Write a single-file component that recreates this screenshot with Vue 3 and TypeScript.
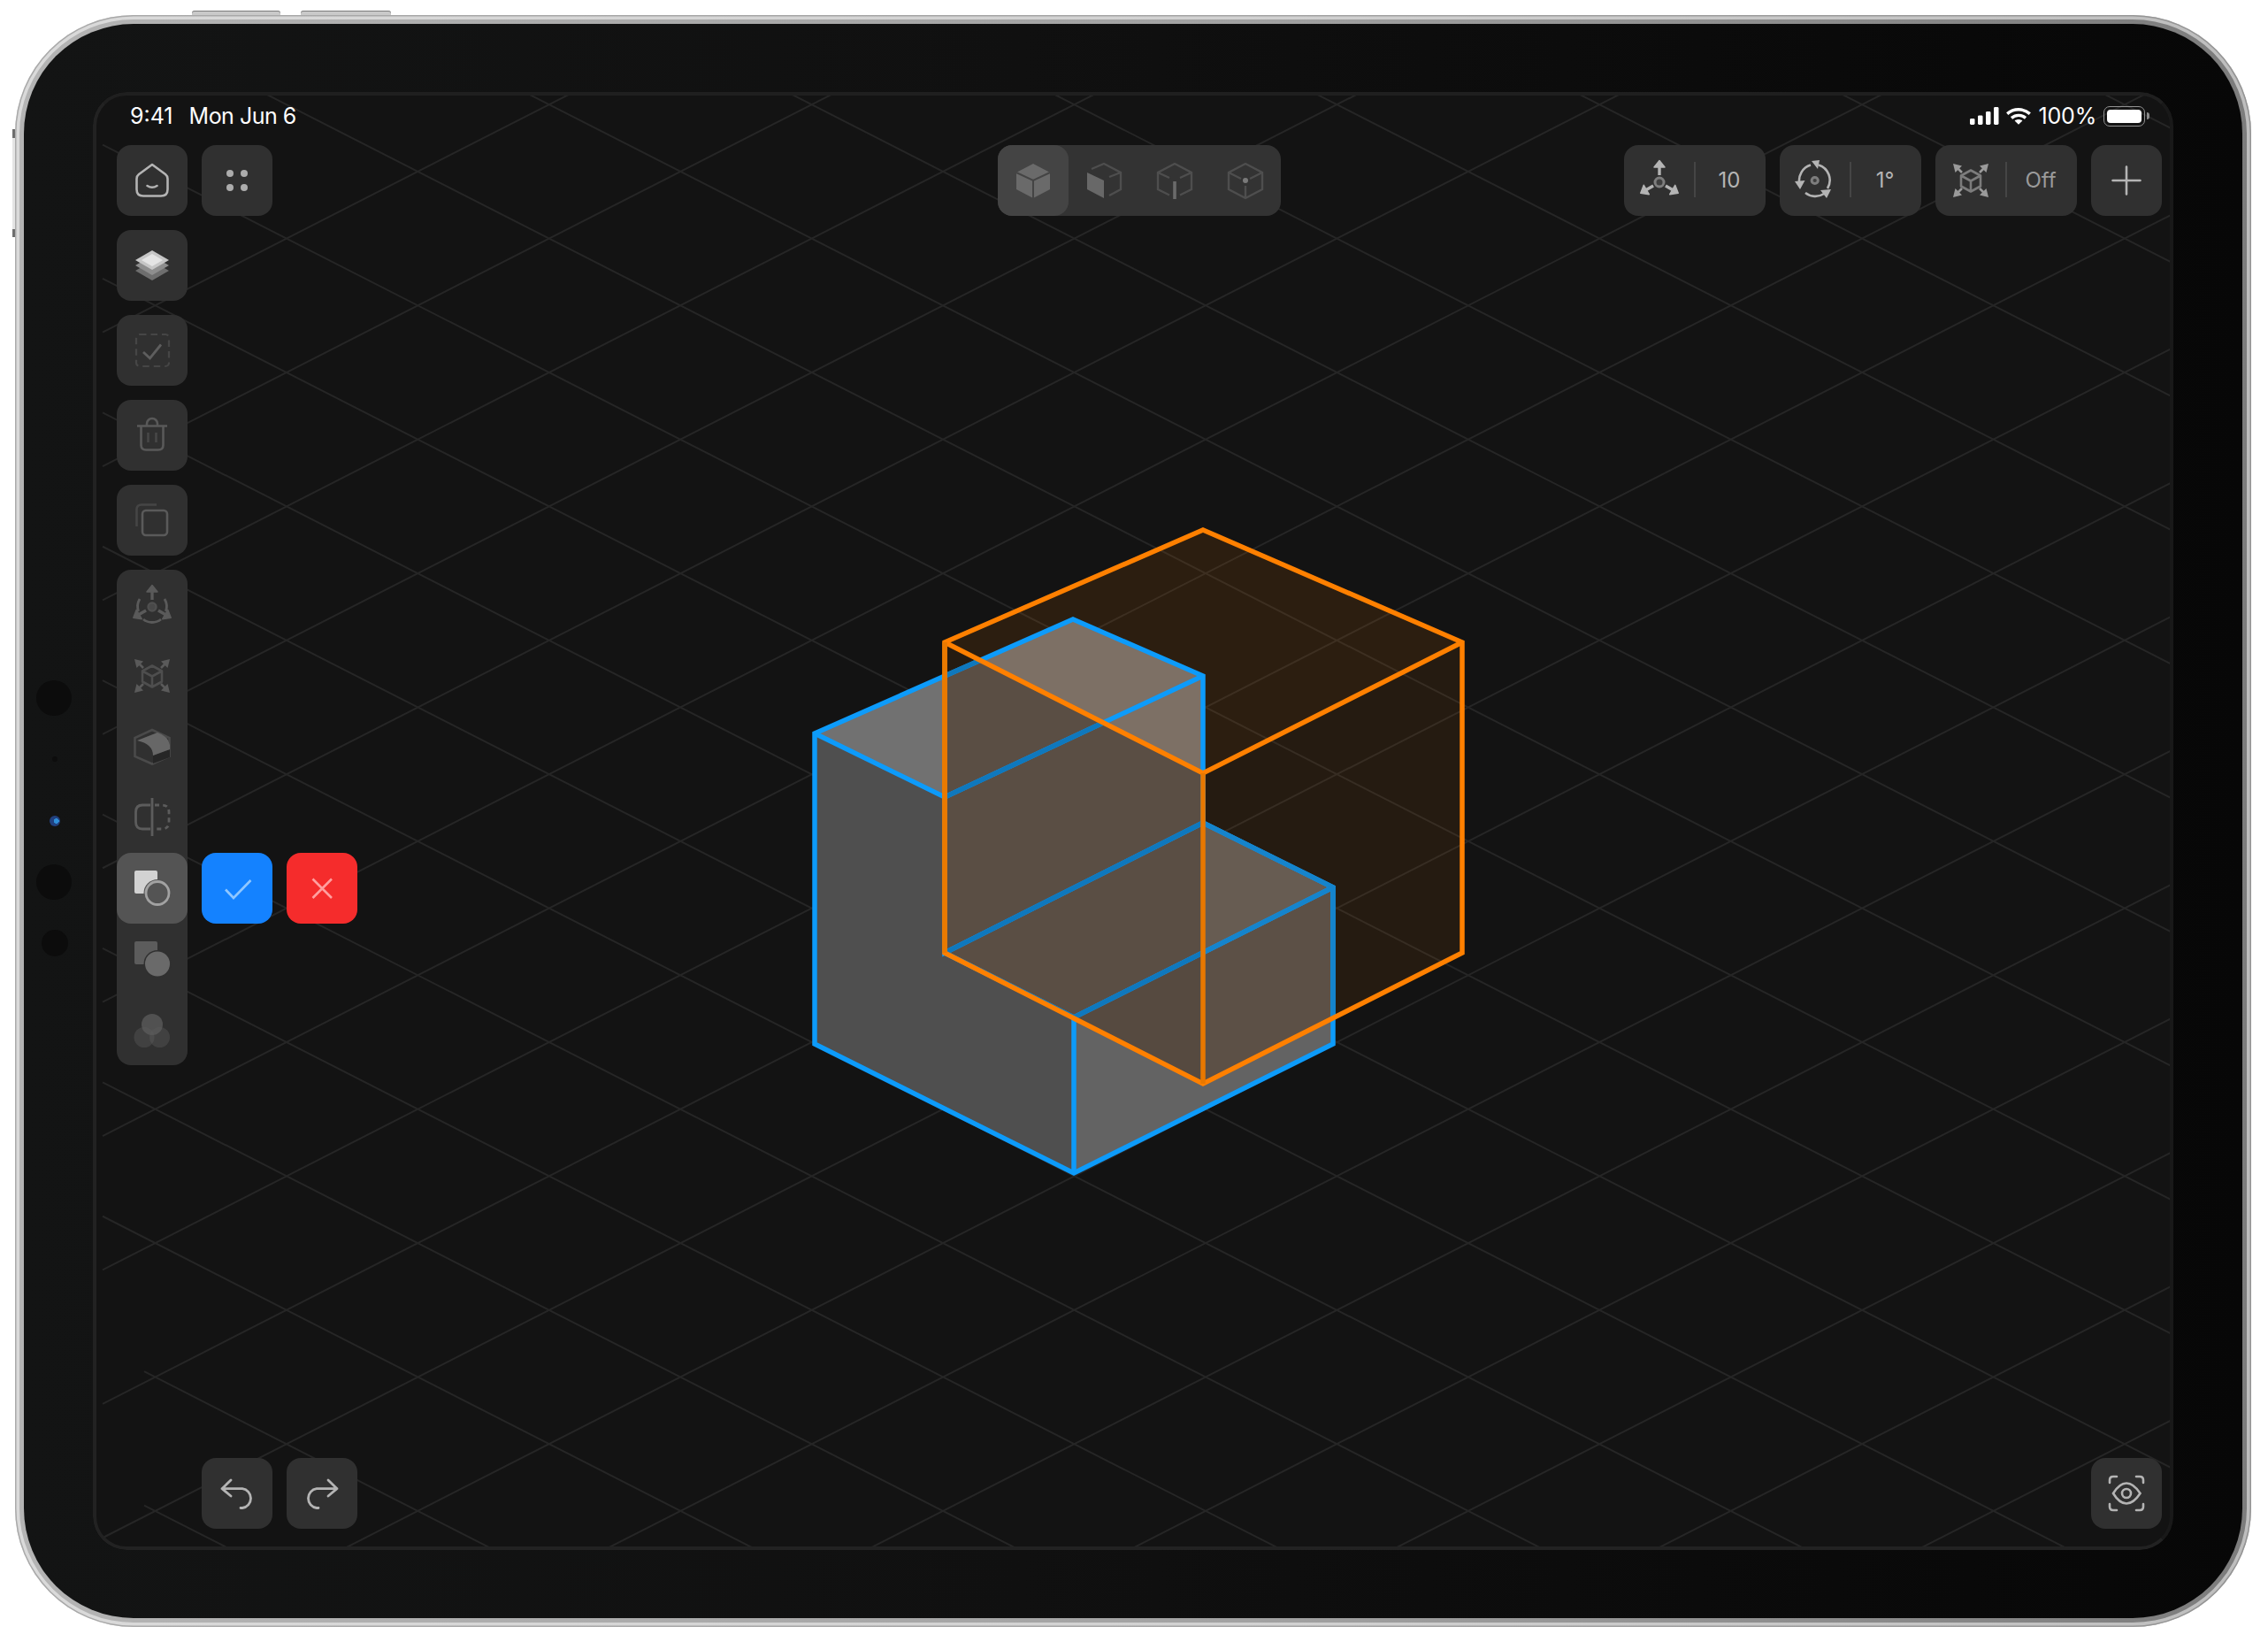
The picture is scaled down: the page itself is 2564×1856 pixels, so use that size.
<script setup lang="ts">
const X0 = 116, X1 = 2460, S = 0.51
const lines: { x1: number; y1: number; x2: number; y2: number }[] = []
for (let k = -12; k < 14; k++) {
  const c = 255.8 + 151.4 * k
  const start = k >= 8 ? 163 : X0
  lines.push({ x1: start, y1: S * start + c, x2: X1, y2: S * X1 + c })
}
for (let k = -2; k < 30; k++) {
  const c = 737.6 + 151.4 * k
  lines.push({ x1: X0, y1: -S * X0 + c, x2: X1, y2: -S * X1 + c })
}
const orangeTop = '1360,599 1653,726 1360,874 1068,726'
const orangeLeft = '1068,726 1360,874 1360,1225 1068,1077'
const orangeRight = '1360,874 1653,726 1653,1077 1360,1225'
const blueOutline = '921,829 1213,700 1360,764 1360,930 1507,1003 1507,1180 1214,1326 921,1180'
const blueTop = '921,829 1213,700 1360,764 1068,901'
const blueWall = '1068,901 1360,764 1360,930 1068,1077'
const blueLeft = '921,829 1068,901 1068,1077 1214,1150 1214,1326 921,1180'
const blueLowerTop = '1068,1077 1360,930 1507,1003 1214,1150'
const blueLowerRight = '1214,1150 1507,1003 1507,1180 1214,1326'
const blueEdges = 'M921 829 L1068 901 L1360 764 M1068 901 V1077 L1360 930 M1068 1077 L1214 1150 L1507 1003 M1214 1150 V1326'
</script>

<template>
  <div class="page">
    <div class="device">
      <i class="top-key key-a"></i>
      <i class="top-key key-b"></i>
      <i class="side-strip"></i>
      <i class="side-tick tick-a"></i>
      <i class="side-tick tick-b"></i>
      <div class="bezel">
        <i class="lens lens-a"></i>
        <i class="lens lens-b"></i>
        <i class="lens lens-c"></i>
        <i class="lens lens-d"></i>
        <i class="lens lens-e"></i>
        <div class="screen">
          <svg class="canvas" viewBox="105 104 2352 1648" width="2352" height="1648">
            <defs>
              <clipPath id="c-top"><polygon :points="orangeTop" /></clipPath>
              <clipPath id="c-left"><polygon :points="orangeLeft" /></clipPath>
              <clipPath id="c-right"><polygon :points="orangeRight" /></clipPath>
            </defs>
            <line v-for="(l, i) in lines" :key="i" :x1="l.x1" :y1="l.y1" :x2="l.x2" :y2="l.y2" class="grid-line" />
            <polygon :points="orangeTop" fill="#ff8000" fill-opacity=".11" />
            <polygon :points="orangeLeft" fill="#ff8000" fill-opacity=".08" />
            <polygon :points="orangeRight" fill="#ff8000" fill-opacity=".08" />
            <polygon :points="blueTop" fill="#717171" />
            <polygon :points="blueWall" fill="#565656" />
            <polygon :points="blueLeft" fill="#4f4f4f" />
            <polygon :points="blueLowerTop" fill="#6a6a6a" />
            <polygon :points="blueLowerRight" fill="#636363" />
            <g clip-path="url(#c-top)">
              <polygon :points="blueOutline" fill="#7d7065" />
            </g>
            <g clip-path="url(#c-left)">
              <polygon :points="blueOutline" fill="#5a4e44" />
              <polygon :points="blueLowerRight" fill="#564a40" />
            </g>
            <g clip-path="url(#c-right)">
              <polygon :points="blueLowerTop" fill="#675c52" />
              <polygon :points="blueLowerRight" fill="#5c5046" />
            </g>
            <g fill="none" stroke-width="5.5" stroke-linejoin="miter">
              <g stroke="#0d9bfa">
                <polygon :points="blueOutline" />
                <path :d="blueEdges" />
              </g>
              <g stroke="#0f78bd" clip-path="url(#c-left)">
                <polygon :points="blueOutline" />
                <path :d="blueEdges" />
              </g>
              <g stroke="#1584cc" clip-path="url(#c-right)">
                <polygon :points="blueOutline" />
                <path :d="blueEdges" />
              </g>
              <g stroke="#ff8000">
                <polygon points="1360,599 1653,726 1653,1077 1360,1225 1068,1077 1068,726" />
                <path d="M1068 726 L1360 874 L1653 726" />
                <path d="M1360 874 V1225" stroke="#e87800" />
                <path d="M1068 726 V1077" stroke="#ea7a00" />
              </g>
            </g>
          </svg>

          <svg class="symbols" width="0" height="0" aria-hidden="true">
            <symbol id="s-axis" viewBox="0 0 80 80">
              <g id="axis-one">
                <path d="M40 34 V23" fill="none" stroke="currentColor" stroke-width="3.4" />
                <path d="M40 17.5 L46 25 H34 Z" fill="currentColor" stroke="currentColor" stroke-width="1.5" stroke-linejoin="round" />
              </g>
              <g transform="rotate(120 40 42)">
                <path d="M40 34 V23" fill="none" stroke="currentColor" stroke-width="3.4" />
                <path d="M40 17.5 L46 25 H34 Z" fill="currentColor" stroke="currentColor" stroke-width="1.5" stroke-linejoin="round" />
              </g>
              <g transform="rotate(240 40 42)">
                <path d="M40 34 V23" fill="none" stroke="currentColor" stroke-width="3.4" />
                <path d="M40 17.5 L46 25 H34 Z" fill="currentColor" stroke="currentColor" stroke-width="1.5" stroke-linejoin="round" />
              </g>
            </symbol>
            <symbol id="s-scale" viewBox="0 0 80 80">
              <g fill="currentColor">
                <path d="M20 21 L30 23.5 L22.5 31 Z" />
                <path d="M60 21 L50 23.5 L57.5 31 Z" />
                <path d="M20 59 L30 56.5 L22.5 49 Z" />
                <path d="M60 59 L50 56.5 L57.5 49 Z" />
              </g>
              <g fill="none" stroke="currentColor" stroke-width="2.6">
                <path d="M25 26 L30 31 M55 26 L50 31 M25 54 L30 49 M55 54 L50 49" />
                <g opacity=".72">
                  <path d="M40 28.5 L51 34.5 V46.5 L40 52.5 L29 46.5 V34.5 Z M29 34.5 L40 40.5 L51 34.5 M40 40.5 V52.5" stroke-linejoin="round" />
                </g>
              </g>
            </symbol>
          </svg>

          <header class="status">
            <span class="status-time">9:41</span>
            <span class="status-date">Mon Jun 6</span>
            <span class="status-fill"></span>
            <svg class="signal" width="33" height="20" viewBox="0 0 33 20" fill="#fff">
              <rect x="0" y="13" width="5.5" height="7" rx="1.4" />
              <rect x="9" y="9.4" width="5.5" height="10.6" rx="1.4" />
              <rect x="18" y="5" width="5.5" height="15" rx="1.4" />
              <rect x="27" y="0" width="5.5" height="20" rx="1.4" />
            </svg>
            <svg class="wifi" width="28" height="19" viewBox="0 0 28 19" fill="none" stroke="#fff" stroke-width="3.4">
              <path d="M1.2 6.6 C8.5 0.2 19.5 0.2 26.8 6.6" />
              <path d="M6 11.4 C10.8 7.4 17.2 7.4 22 11.4" />
              <path d="M14 18.8 L9.6 14.6 C12 12.6 16 12.6 18.4 14.6 Z" fill="#fff" stroke="none" />
            </svg>
            <span class="status-batt">100%</span>
            <span class="battery"><i></i></span>
            <span class="battery-nub"></span>
          </header>

          <div class="topbar">
            <div class="row">
              <button class="btn">
                <svg viewBox="0 0 80 80" fill="none" stroke="currentColor" stroke-width="2.6" stroke-linejoin="round" stroke-linecap="round">
                  <path d="M40 22 L55 33 Q57.5 35 57.5 38 V50 Q57.5 57.5 50 57.5 H30 Q22.5 57.5 22.5 50 V38 Q22.5 35 25 33 Z" />
                  <path d="M34.5 46 Q40 49.5 45.5 46" />
                </svg>
              </button>
              <button class="btn">
                <svg viewBox="0 0 80 80" fill="#acacac">
                  <circle cx="32" cy="32" r="4" />
                  <circle cx="48" cy="32" r="4" />
                  <circle cx="32" cy="48" r="4" />
                  <circle cx="48" cy="48" r="4" />
                </svg>
              </button>
            </div>

            <div class="segment">
              <button class="seg-item seg-on">
                <svg viewBox="0 0 80 80">
                  <path d="M40 21 L59 31 V50 L40 60 L21 50 V31 Z" fill="#6a6a6a" />
                  <path d="M21 31 L40 40 L59 31 M40 40 V60" fill="none" stroke="#444" stroke-width="2" />
                </svg>
              </button>
              <button class="seg-item">
                <svg viewBox="0 0 80 80" fill="none" stroke="#4e4e4e" stroke-width="2.4">
                  <path d="M26 27 L40 21 L59 31 V50 L46 57 M46 36 L59 31" />
                  <path d="M21 31 L40 40 V60 L21 50 Z" fill="#686868" stroke="none" />
                </svg>
              </button>
              <button class="seg-item">
                <svg viewBox="0 0 80 80" fill="none" stroke="#4e4e4e" stroke-width="2.4">
                  <path d="M34 56.5 L21 50 V31 L40 21 L59 31 V50 L46 56.5 M21 31 L34 37 M59 31 L46 37" />
                  <path d="M40 41 V61" stroke="#6a6a6a" stroke-width="3.6" />
                </svg>
              </button>
              <button class="seg-item">
                <svg viewBox="0 0 80 80" fill="none" stroke="#4e4e4e" stroke-width="2.4">
                  <path d="M40 60 L21 50 V31 L40 21 L59 31 V50 Z M21 31 L35 38 M59 31 L45 38 M40 46 V60" />
                  <circle cx="40" cy="40" r="3" fill="#7a7a7a" stroke="none" />
                </svg>
              </button>
            </div>

            <div class="row tools">
              <div class="pill">
                <span class="pill-icon">
                  <svg viewBox="0 0 80 80">
                    <use href="#s-axis" />
                    <circle cx="40" cy="42" r="5" fill="#3f3f3f" stroke="#7d7d7d" stroke-width="3" />
                  </svg>
                </span>
                <span class="pill-value">10</span>
              </div>
              <div class="pill">
                <span class="pill-icon">
                  <svg viewBox="0 0 80 80" fill="none" stroke="currentColor" stroke-width="2.6">
                    <path d="M22.5 44 A18 18 0 0 1 35 22.6 M44 22.5 A18 18 0 0 1 54 49 M50 55 A18 18 0 0 1 29 54" />
                    <path d="M17 41 L28.5 40 L23 50 Z M36 18 L45 17 L43 27 Z M46 51 L58 50 L53 60 Z" fill="currentColor" stroke="none" />
                    <circle cx="39.7" cy="40" r="3.6" fill="#3f3f3f" stroke="#7d7d7d" stroke-width="3" />
                  </svg>
                </span>
                <span class="pill-value">1°</span>
              </div>
              <div class="pill pill-off">
                <span class="pill-icon">
                  <svg viewBox="0 0 80 80"><use href="#s-scale" /></svg>
                </span>
                <span class="pill-value">Off</span>
              </div>
              <button class="btn">
                <svg viewBox="0 0 80 80" fill="none" stroke="currentColor" stroke-width="2.6" stroke-linecap="round">
                  <path d="M40 24.5 V55.5 M24.5 40 H55.5" />
                </svg>
              </button>
            </div>
          </div>

          <main class="workspace">
            <aside class="rail">
              <button class="btn">
                <svg viewBox="0 0 80 80">
                  <path d="M40 35 L59 46 L40 57 L21 46 Z" fill="#6e6e6e" />
                  <path d="M40 29 L59 40 L40 51 L21 40 Z" fill="#8e8e8e" />
                  <path d="M40 23 L59 34 L40 45 L21 34 Z" fill="#c6c6c6" />
                  <path d="M40 27 L52 34 L40 41 L28 34 Z" fill="#e4e4e4" />
                </svg>
              </button>
              <button class="btn dim">
                <svg viewBox="0 0 80 80" fill="none">
                  <rect x="22" y="22" width="37" height="36" rx="4" stroke="#464646" stroke-width="2.2" stroke-dasharray="7.5 5" />
                  <path d="M30 42 L37.5 49 L50 33.5" stroke="#5e5e5e" stroke-width="2.8" />
                </svg>
              </button>
              <button class="btn dim">
                <svg viewBox="0 0 80 80" fill="none" stroke="#595959" stroke-width="2.6">
                  <path d="M23 29.5 H57" />
                  <path d="M34 29 V27 A6 6 0 0 1 46 27 V29" />
                  <path d="M27.5 30 V51 Q27.5 56.5 33 56.5 H47 Q52.5 56.5 52.5 51 V30" />
                  <path d="M35.5 37 V48 M44.5 37 V48" stroke="#474747" />
                </svg>
              </button>
              <button class="btn dim">
                <svg viewBox="0 0 80 80" fill="none" stroke-width="2.6">
                  <rect x="29" y="29" width="28" height="28" rx="4" stroke="#5a5a5a" />
                  <path d="M22.5 47 V28 Q22.5 22.5 28 22.5 H45" stroke="#454545" />
                </svg>
              </button>
              <div class="rail-group">
                <button class="btn dim flat">
                  <svg viewBox="0 0 80 80" fill="none">
                    <use href="#s-axis" style="color: #5a5a5a" />
                    <path d="M26 33 A16.5 16.5 0 0 0 24.5 47 M54 33 A16.5 16.5 0 0 1 55.5 47 M30 56 A16 16 0 0 0 50 56" stroke="#5a5a5a" stroke-width="2.8" />
                    <circle cx="40" cy="42" r="4.5" fill="#484848" stroke="#4f4f4f" stroke-width="2.4" />
                  </svg>
                </button>
                <button class="btn dim flat">
                  <svg viewBox="0 0 80 80"><use href="#s-scale" style="color: #5a5a5a" /></svg>
                </button>
                <button class="btn dim flat">
                  <svg viewBox="0 0 80 80">
                    <path d="M40 21 L59.5 30 V51 L40 59.5 L20.5 51 V30 Z" fill="none" stroke="#4a4a4a" stroke-width="2.6" />
                    <path d="M41 50 L60 43 V52 L41 59 Z" fill="#262626" />
                    <path d="M23 33 L46 24 Q58 28 60 38 V43 L41 50 Q41 37 23 33 Z" fill="#676767" />
                  </svg>
                </button>
                <button class="btn dim flat">
                  <svg viewBox="0 0 80 80" fill="none" stroke="#5c5c5c" stroke-width="2.8">
                    <path d="M38 26 H29 Q21.5 26 21.5 34 V45 Q21.5 53 29 53 H38" />
                    <path d="M43 26 H51 Q59 26 59 34 V45 Q59 53 51 53 H43" stroke-dasharray="5 4" />
                    <path d="M40 18 V61" />
                  </svg>
                </button>
                <button class="btn btn-on">
                  <svg viewBox="0 0 80 80">
                    <rect x="20" y="20" width="26" height="26" rx="2" fill="#d2d2d2" />
                    <circle cx="46" cy="45.5" r="15.5" fill="#545454" />
                    <circle cx="46" cy="45.5" r="13" fill="#545454" stroke="#a2a2a2" stroke-width="2.8" />
                  </svg>
                </button>
                <button class="btn dim flat">
                  <svg viewBox="0 0 80 80">
                    <rect x="20" y="20" width="26" height="26" rx="2" fill="#5c5c5c" />
                    <circle cx="46" cy="45.5" r="15.5" fill="#303030" />
                    <circle cx="46" cy="45.5" r="14" fill="#6a6a6a" />
                  </svg>
                </button>
                <button class="btn dim flat">
                  <svg viewBox="0 0 80 80" fill="#5c5c5c">
                    <circle cx="40" cy="34" r="12" fill-opacity=".75" />
                    <circle cx="31" cy="48.5" r="11.5" fill-opacity=".4" />
                    <circle cx="48.5" cy="48.5" r="11.5" fill-opacity=".4" />
                  </svg>
                </button>
              </div>
            </aside>

            <section class="side">
              <div class="row confirm">
                <button class="btn btn-ok">
                  <svg viewBox="0 0 80 80" fill="none" stroke="#90c7ff" stroke-width="2.6">
                    <path d="M27 41.5 L36 51 L55.5 31" />
                  </svg>
                </button>
                <button class="btn btn-no">
                  <svg viewBox="0 0 80 80" fill="none" stroke="#ff9f9f" stroke-width="2.6">
                    <path d="M29.5 29.5 L51 51 M51 29.5 L29.5 51" />
                  </svg>
                </button>
              </div>
              <div class="row">
                <button class="btn">
                  <svg viewBox="0 0 80 80" fill="none" stroke="currentColor" stroke-width="2.8" stroke-linecap="round" stroke-linejoin="round">
                    <path d="M33 25 L23 34.7 L33 43 M23 34.7 H46 A11 11 0 0 1 46 56.5 H44" />
                  </svg>
                </button>
                <button class="btn">
                  <svg viewBox="0 0 80 80" fill="none" stroke="currentColor" stroke-width="2.8" stroke-linecap="round" stroke-linejoin="round">
                    <path d="M47 25 L57 34.7 L47 43 M57 34.7 H34 A11 11 0 0 0 34 56.5 H36" />
                  </svg>
                </button>
              </div>
            </section>

            <div class="corner">
              <button class="btn">
                <svg viewBox="0 0 80 80" fill="none" stroke="currentColor" stroke-width="2.6" stroke-linecap="round">
                  <path d="M21 28 V25 Q21 21 25 21 H29 M51 21 H55 Q59 21 59 25 V28 M21 52 V55 Q21 59 25 59 H29 M51 59 H55 Q59 59 59 55 V52" />
                  <path d="M25 40 Q32 28.5 40 28.5 Q48 28.5 55.5 40 Q48 51.5 40 51.5 Q32 51.5 25 40 Z" />
                  <circle cx="40" cy="40" r="5" />
                </svg>
              </button>
            </div>
          </main>
        </div>
      </div>
    </div>
  </div>
</template>

<style>
html, body { background: #fff; margin: 0; }
</style>

<style scoped>
.page {
  box-sizing: border-box;
  width: 2564px;
  height: 1856px;
  padding: 17px 19px 17px 17px;
  background: #fff;
  font-family: Inter, "Liberation Sans", sans-serif;
}
.device {
  position: relative;
  box-sizing: border-box;
  height: 100%;
  padding: 10px;
  border-radius: 134px;
  background: linear-gradient(90deg, #b4b4b4 0%, #a2a2a2 55%, #7c7c7c 100%);
  box-shadow: inset 0 0 0 1.5px rgba(0, 0, 0, .22), inset 0 0 0 5px rgba(255, 255, 255, .5);
}
.top-key {
  position: absolute;
  top: -5px;
  height: 5px;
  border-radius: 3px 3px 0 0;
  background: #c9c9c9;
  box-shadow: inset 0 1px 0 #7d7d7d;
}
.key-a { left: 200px; width: 100px; }
.key-b { left: 323px; width: 102px; }
.side-strip {
  position: absolute;
  left: -3px;
  top: 129px;
  width: 3px;
  height: 122px;
  background: #e4e4e4;
}
.side-tick {
  position: absolute;
  left: -3px;
  width: 3px;
  background: #6e6e6e;
}
.tick-a { top: 129px; height: 10px; }
.tick-b { top: 242px; height: 9px; }
.bezel {
  position: relative;
  box-sizing: border-box;
  height: 100%;
  padding: 77px 78px;
  border-radius: 124px;
  background: linear-gradient(90deg, #131414 0%, #101010 45%, #070707 100%);
}
.lens {
  position: absolute;
  border-radius: 50%;
  background: #0c0c0c;
}
.lens-a { left: 14px; top: 742px; width: 40px; height: 40px; }
.lens-b { left: 32px; top: 828px; width: 6px; height: 6px; background: #0d0d0d; }
.lens-c { left: 29px; top: 895px; width: 12px; height: 12px; background: radial-gradient(circle at 65% 50%, #2f8ed8 0 28%, #21407f 30% 75%, #101a30 100%); }
.lens-d { left: 14px; top: 950px; width: 40px; height: 40px; }
.lens-e { left: 20px; top: 1024px; width: 30px; height: 30px; }
.screen {
  position: relative;
  box-sizing: border-box;
  display: flex;
  flex-direction: column;
  height: 100%;
  padding: 0 13px 24px 27px;
  border-radius: 38px;
  overflow: hidden;
  background: #131313;
}
.screen::after {
  content: "";
  position: absolute;
  inset: 0;
  border-radius: 38px;
  border: 4px solid #222;
  border-right-color: #191919;
  border-top-color: #1f1f1f;
  pointer-events: none;
}
.canvas {
  position: absolute;
  left: 0;
  top: 0;
}
.symbols { position: absolute; }
.grid-line {
  stroke: #262626;
  stroke-width: 2;
}
.status {
  position: relative;
  display: flex;
  align-items: center;
  height: 60px;
  padding: 0 14px 6px 15px;
  box-sizing: border-box;
  color: #fff;
  font-size: 25px;
  line-height: 30px;
}
.status-date { margin-left: 18px; letter-spacing: -0.5px; }
.status-fill { flex: 1; }
.signal { margin-right: 8px; }
.wifi { margin-right: 9px; }
.status-batt { margin-right: 8px; letter-spacing: -0.2px; }
.battery {
  box-sizing: border-box;
  display: block;
  width: 47px;
  height: 23px;
  padding: 3px;
  border: 1.5px solid #929292;
  border-radius: 7px;
}
.battery i {
  display: block;
  height: 100%;
  border-radius: 4px;
  background: #fff;
}
.battery-nub {
  width: 3px;
  height: 8px;
  margin-left: 2px;
  border-radius: 0 3px 3px 0;
  background: #8a8a8a;
}
.topbar {
  position: relative;
  display: flex;
  align-items: flex-start;
}
.row {
  display: flex;
  gap: 16px;
}
.tools { margin-left: auto; }
.btn {
  display: block;
  flex: none;
  width: 80px;
  height: 80px;
  padding: 0;
  border: 0;
  border-radius: 16px;
  background: #303030;
  color: #b4b4b4;
}
.btn svg, .seg-item svg, .pill-icon svg {
  display: block;
  width: 80px;
  height: 80px;
}
.btn.flat { background: transparent; }
.btn-on { background: #545454; }
.btn-ok { background: #1482ff; }
.btn-no { background: #f52c2c; }
.segment {
  display: flex;
  margin-left: 820px;
  border-radius: 16px;
  background: #333;
}
.seg-item {
  width: 80px;
  height: 80px;
  padding: 0;
  border: 0;
  border-radius: 16px;
  background: transparent;
}
.seg-on { background: #444; }
.pill {
  display: flex;
  width: 160px;
  height: 80px;
  border-radius: 16px;
  background: #303030;
  color: #b4b4b4;
}
.pill-off { color: #9a9a9a; }
.pill-icon {
  position: relative;
  width: 80px;
  height: 80px;
}
.pill-icon::after {
  content: "";
  position: absolute;
  right: -1px;
  top: 19px;
  width: 2px;
  height: 40px;
  background: #454545;
}
.pill-value {
  flex: 1;
  text-align: center;
  font-size: 24px;
  line-height: 80px;
  padding-right: 2px;
}
.workspace {
  position: relative;
  flex: 1;
  display: flex;
  gap: 16px;
  margin-top: 16px;
}
.rail {
  display: flex;
  flex-direction: column;
  gap: 16px;
}
.rail-group {
  width: 80px;
  border-radius: 16px;
  background: #303030;
}
.side {
  flex: 1;
  display: flex;
  flex-direction: column;
  justify-content: space-between;
  padding-top: 704px;
}
.corner {
  display: flex;
  align-items: flex-end;
}
</style>
